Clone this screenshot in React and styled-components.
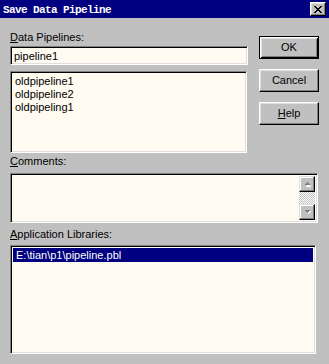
import React from "react";
import styled, { createGlobalStyle } from "styled-components";

const Global = createGlobalStyle`
  html, body { margin: 0; padding: 0; background: #c0c0c0; }
  * { box-sizing: border-box; }
`;

const items = ["oldpipeline1", "oldpipeline2", "oldpipeling1"];

const App = () => {
  return (
    <>
      <Global />
      <Window>
        <TitleBar>
          <Title>Save Data Pipeline</Title>
          <CloseButton>
            <svg width="8" height="7" viewBox="0 0 8 7" shapeRendering="crispEdges">
              <path
                d="M0 0h2v1h1v1h2v-1h1v-1h2v1h-1v1h-1v1h-1v1h1v1h1v1h1v1h-2v-1h-1v-1h-2v1h-1v1h-2v-1h1v-1h1v-1h1v-1h-1v-1h-1v-1h-1z"
                fill="#000"
              />
            </svg>
          </CloseButton>
        </TitleBar>
        <Body>
          <TopRow>
            <LeftCol>
              <Label $after={2}>
                <u>D</u>ata Pipelines:
              </Label>
              <TextInput>pipeline1</TextInput>
              <ListBox $w={237} $h={82}>
                {items.map((v, i) => (
                  <Item key={i}>{v}</Item>
                ))}
              </ListBox>
            </LeftCol>
            <ButtonCol>
              <DefaultButton>OK</DefaultButton>
              <Button>Cancel</Button>
              <Button>
                <u>H</u>elp
              </Button>
            </ButtonCol>
          </TopRow>

          <Label $before={2} $after={5}>
            <u>C</u>omments:
          </Label>
          <CommentBox>
            <CommentText />
            <ScrollBar>
              <ScrollButton>
                <svg width="7" height="5" viewBox="0 0 7 5" shapeRendering="crispEdges">
                  <path d="M3 1h1v1h1v1h1v1h-5v-1h1v-1h1z" fill="#fff" transform="translate(1 1)" />
                  <path d="M3 0h1v1h1v1h1v1h-5v-1h1v-1h1z" fill="#808080" />
                </svg>
              </ScrollButton>
              <Track />
              <ScrollButton>
                <svg width="7" height="5" viewBox="0 0 7 5" shapeRendering="crispEdges">
                  <path d="M0 0h5v1h-1v1h-1v1h-1v-1h-1v-1h-1z" fill="#fff" transform="translate(2 1)" />
                  <path d="M0 0h5v1h-1v1h-1v1h-1v-1h-1v-1h-1z" fill="#808080" transform="translate(1 0)" />
                </svg>
              </ScrollButton>
            </ScrollBar>
          </CommentBox>

          <Label $before={5} $after={4}>
            <u>A</u>pplication Libraries:
          </Label>
          <ListBox $w={306} $h={109} $pad={0}>
            <Selected>E:\tian\p1\pipeline.pbl</Selected>
          </ListBox>
        </Body>
      </Window>
    </>
  );
};

export default App;

// ventana
const Window = styled.div`
  width: 329px;
  height: 364px;
  background: #c0c0c0;
  font-family: "Liberation Sans", Arial, sans-serif;
  font-size: 11px;
  color: #000;
  display: flex;
  flex-direction: column;
  overflow: hidden;
`;

const TitleBar = styled.div`
  height: 18px;
  background: #000080;
  display: flex;
  align-items: center;
  justify-content: space-between;
  padding: 0 3px 0 3px;
`;

const Title = styled.div`
  font-family: "Liberation Mono", "Courier New", monospace;
  font-weight: bold;
  font-size: 11px;
  letter-spacing: -0.6px;
  color: #fff;
  line-height: 16px;
  padding-top: 2px;
  white-space: nowrap;
`;

const CloseButton = styled.div`
  width: 16px;
  height: 14px;
  background: #c0c0c0;
  border: 1px solid;
  border-color: #fff #000 #000 #fff;
  box-shadow: inset -1px -1px #808080, inset 1px 1px #dfdfdf;
  display: flex;
  align-items: center;
  justify-content: center;
  padding-left: 0px;
`;

// cuerpo
const Body = styled.div`
  padding: 13px 11px 0 10px;
  display: flex;
  flex-direction: column;
`;

const TopRow = styled.div`
  display: flex;
  gap: 11px;
`;

const LeftCol = styled.div`
  width: 238px;
  display: flex;
  flex-direction: column;
`;

const ButtonCol = styled.div`
  margin-top: 5px;
  display: flex;
  flex-direction: column;
  gap: 10px;
`;

const Label = styled.div`
  line-height: 13px;
  height: 13px;
  margin-top: ${(p) => p.$before || 0}px;
  margin-bottom: ${(p) => p.$after || 0}px;
  white-space: nowrap;
  u { text-underline-offset: 1px; }
`;

const sunken = `
  background: #fffbf0;
  border: 1px solid;
  border-color: #808080 #fff #fff #808080;
  box-shadow: inset 1px 1px #000, inset -1px -1px #dfdfdf;
`;

const TextInput = styled.div`
  ${sunken}
  height: 19px;
  width: 238px;
  padding: 3px 0 0 3px;
  line-height: 13px;
  margin-bottom: 6px;
`;

const ListBox = styled.div`
  ${sunken}
  width: ${(p) => p.$w}px;
  height: ${(p) => p.$h}px;
  padding: ${(p) => (p.$pad === 0 ? "2px 2px" : "3px 4px")};
`;

const Item = styled.div`
  line-height: 13px;
  height: 13px;
`;

const Selected = styled.div`
  background: #000080;
  color: #fff;
  height: 14px;
  line-height: 14px;
  padding-left: 3px;
`;

const CommentBox = styled.div`
  ${sunken}
  width: 308px;
  height: 50px;
  padding: 2px;
  display: flex;
`;

const CommentText = styled.div`
  flex: 1;
`;

const ScrollBar = styled.div`
  width: 16px;
  display: flex;
  flex-direction: column;
`;

const ScrollButton = styled.div`
  width: 16px;
  height: 16px;
  background: #c0c0c0;
  border: 1px solid;
  border-color: #dfdfdf #000 #000 #dfdfdf;
  box-shadow: inset -1px -1px #808080, inset 1px 1px #fff;
  display: flex;
  align-items: center;
  justify-content: center;
`;

const Track = styled.div`
  flex: 1;
  background: repeating-conic-gradient(#c0c0c0 0 25%, #fff 0 50%) 0 0 / 2px 2px;
`;

// botones
const Button = styled.div`
  width: 60px;
  height: 23px;
  background: #c0c0c0;
  border: 1px solid;
  border-color: #fff #000 #000 #fff;
  box-shadow: inset -1px -1px #808080, inset 1px 1px #dfdfdf;
  display: flex;
  align-items: center;
  justify-content: center;
  line-height: 13px;
  u { text-underline-offset: 1px; }
`;

const DefaultButton = styled(Button)`
  border-color: #000;
  box-shadow: inset 1px 1px #fff, inset -1px -1px #000, inset 2px 2px #dfdfdf,
    inset -2px -2px #808080;
`;
